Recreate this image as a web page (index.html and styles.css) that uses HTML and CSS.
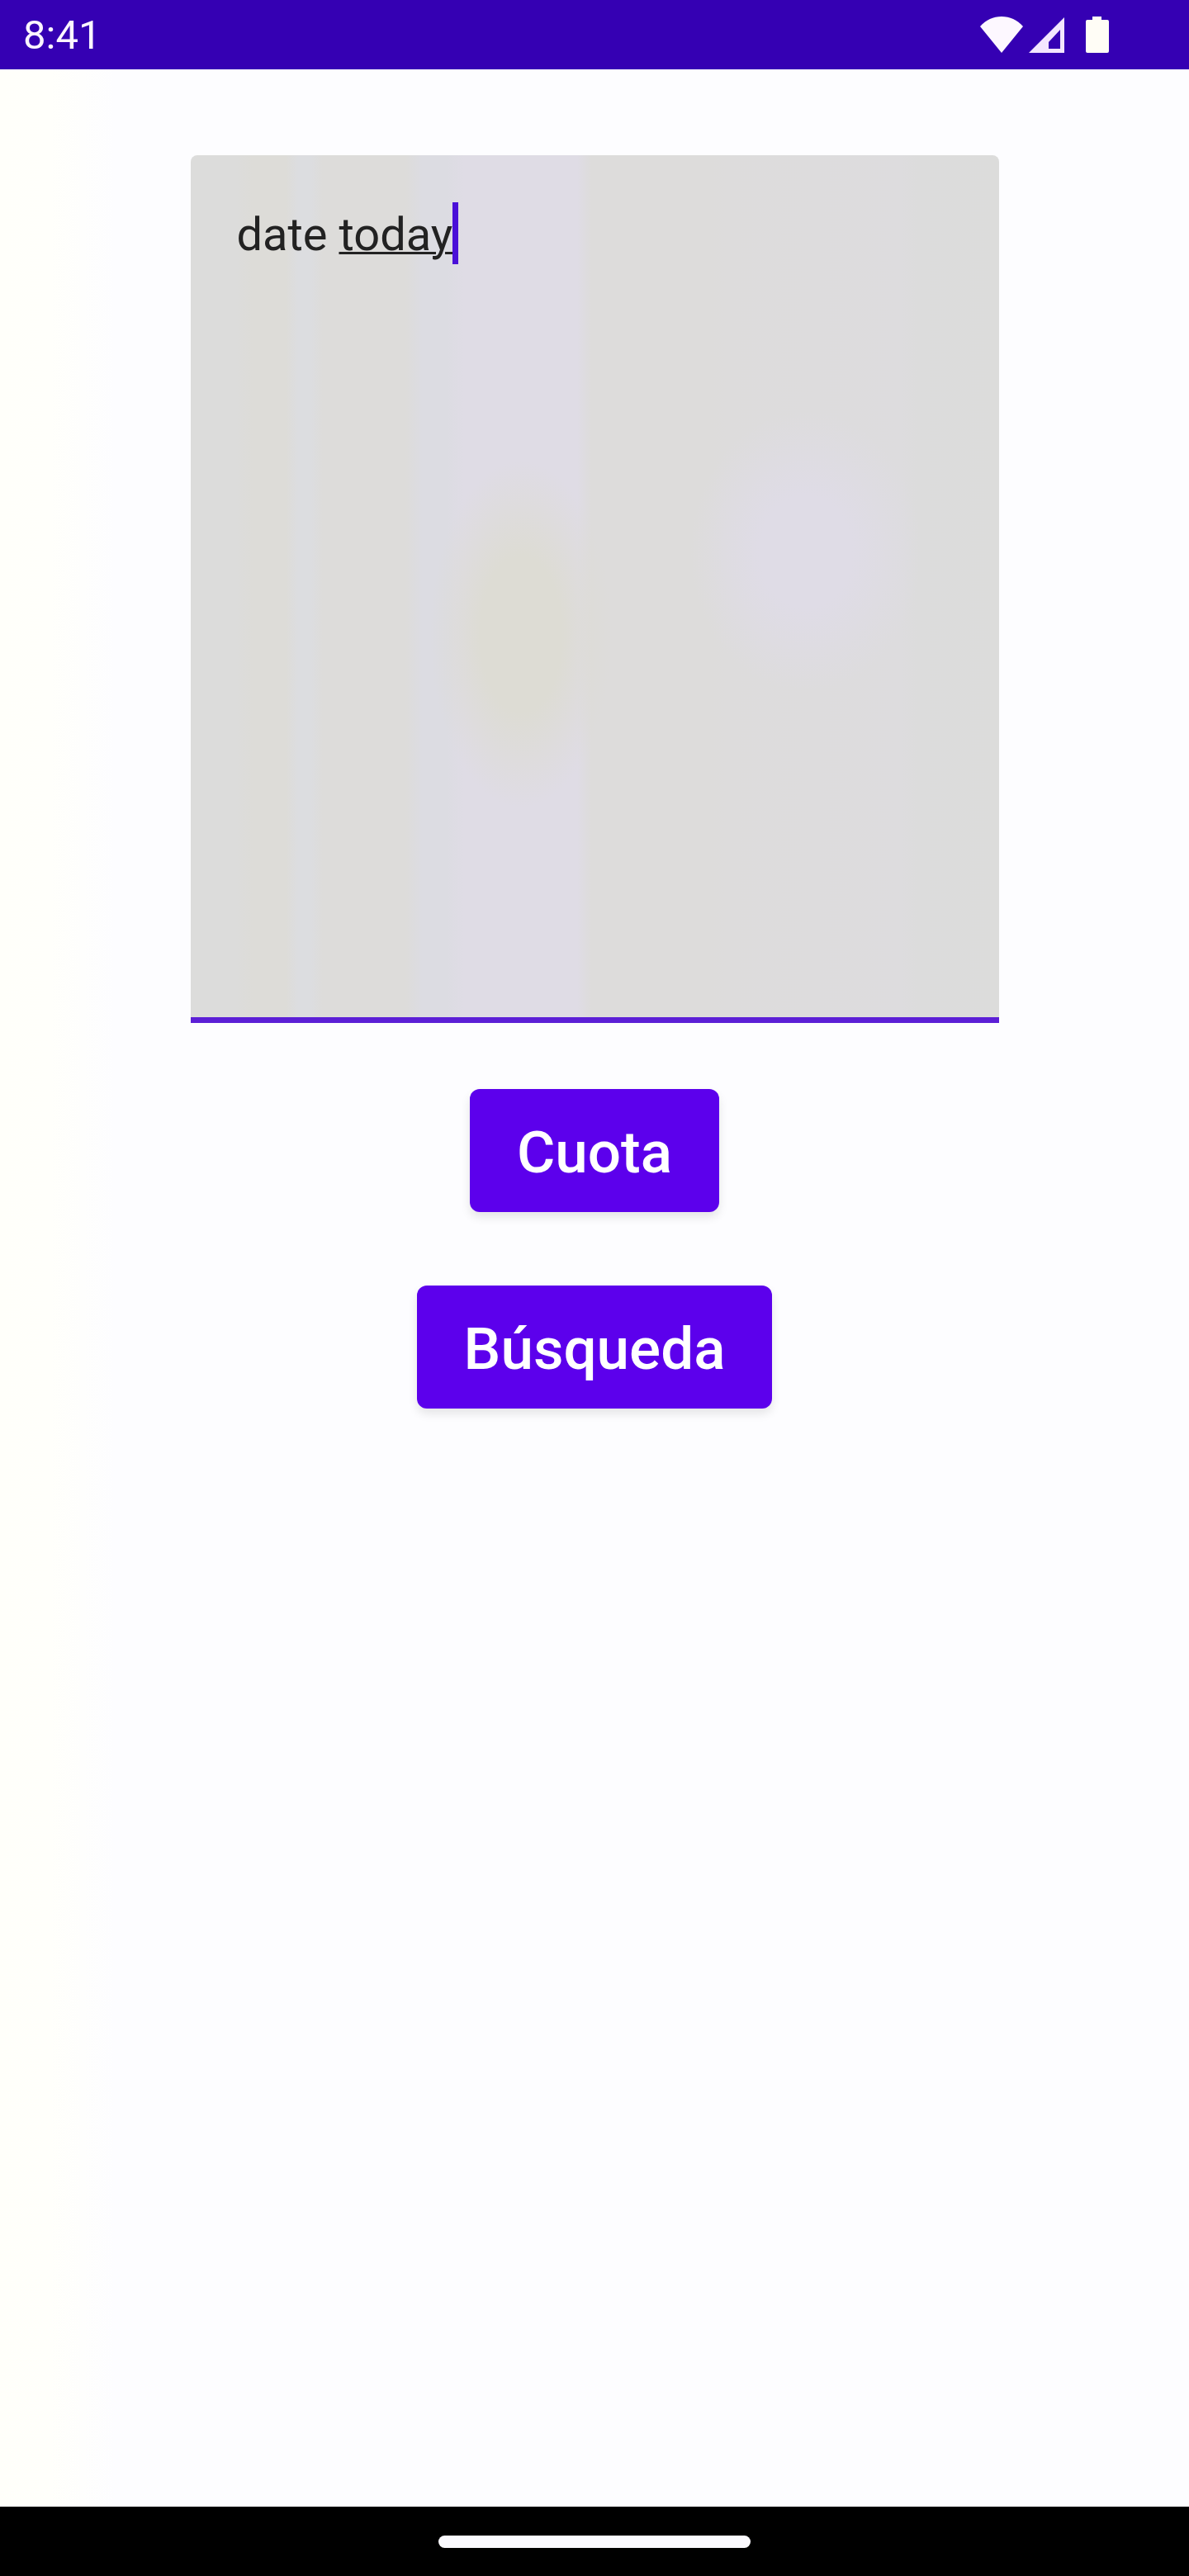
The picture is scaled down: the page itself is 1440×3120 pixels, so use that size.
FILE: index.html
```html
<!DOCTYPE html>
<html lang="en">
<head>
  <meta charset="UTF-8">
  <meta name="viewport" content="width=device-width, initial-scale=1.0">
  <title>Notes</title>
  <link rel="stylesheet" href="styles.css">
</head>
<body>
  <header class="status-bar">
    <div class="clock">8:41</div>
    <div class="status-icons">
      <svg class="icon-wifi" width="54" height="46" viewBox="0 0 54 46"><path d="M1 13C8 5 17 1 27 1s19 4 26 12L27 45z" fill="#fdf8ff"/></svg>
      <svg class="icon-signal" width="46" height="45" viewBox="0 0 46 45"><path fill-rule="evenodd" d="M44 1v43H1zM39 16 25 31v8h14z" fill="#f3e6ff"/></svg>
      <svg class="icon-battery" width="30" height="46" viewBox="0 0 30 46"><path d="M9 1h11v4h7q2 0 2 2v36q0 2-2 2H3q-2 0-2-2V7q0-2 2-2h6z" fill="#fffdf6"/></svg>
    </div>
  </header>

  <main>
    <div class="note-field">
      <p class="note-text">date <span class="composing">today</span><span class="caret"></span></p>
    </div>
    <button class="action" type="button">Cuota</button>
    <button class="action" type="button">Búsqueda</button>
  </main>

  <footer class="nav-bar">
    <div class="home-pill"></div>
  </footer>
</body>
</html>
```

FILE: styles.css
```css
html, body {
  height: 100%;
}
body {
  font-family: Roboto, "Liberation Sans", sans-serif;
  margin: 0;
  display: flex;
  flex-direction: column;
  background: linear-gradient(90deg, #fffffa 0, #fffffb 60px, #fdfdff 140px, #fdfdff 100%);
}
.status-bar {
  height: 84px;
  flex: none;
  box-sizing: border-box;
  background-color: #3500b3;
  color: #fbf5ff;
  display: flex;
  justify-content: space-between;
  align-items: center;
  padding: 0 96px 0 28px;
}
.clock {
  font-size: 49px;
  line-height: 87px;
}
.status-icons {
  display: flex;
  align-items: center;
}
.icon-signal {
  margin: 0 23px 0 5px;
}
main {
  flex: 1;
  display: flex;
  flex-direction: column;
  align-items: center;
  padding-top: 104px;
}
.note-field {
  width: 979px;
  height: 1051px;
  flex: none;
  box-sizing: border-box;
  padding: 57px 56px 0;
  border-radius: 8px 8px 0 0;
  border-bottom: 7px solid #5c1fd6;
  background:
    radial-gradient(ellipse 140px 170px at 745px 480px, #dfdce6 40%, transparent) no-repeat,
    radial-gradient(ellipse 110px 210px at 400px 580px, #dddcd4 45%, transparent) no-repeat,
    linear-gradient(90deg,
      #dcdcdb 0, #dcdcdb 55px, #dddcd8 75px, #dddcd8 115px, #dcdde0 130px, #dcdde0 145px,
      #dddcda 160px, #dddcda 260px, #dcdce2 280px, #dcdce2 310px, #dfdce5 330px, #dfdce5 468px,
      #dddcdb 485px, #dddcdb 630px, #dddcdc 650px, #dddcde 860px, #dcdcdc 880px, #dcdcdb 100%);
}
.note-text {
  margin: 0;
  font-size: 56px;
  line-height: 74px;
  color: #222;
}
.composing {
  text-decoration: underline;
  text-decoration-thickness: 3px;
}
.caret {
  display: inline-block;
  width: 7px;
  height: 75px;
  background-color: #4a10d8;
  vertical-align: -17px;
}
.action {
  flex: none;
  height: 149px;
  margin-top: 80px;
  padding: 3px 56.5px 0;
  border: 0;
  border-radius: 12px;
  background-color: #5c00ec;
  color: #fff;
  font-family: inherit;
  font-size: 71px;
  font-weight: 500;
  box-shadow: 0 6px 12px rgba(0, 0, 0, 0.1);
}
.action + .action {
  margin-top: 89px;
}
.nav-bar {
  height: 84px;
  flex: none;
  box-sizing: border-box;
  background-color: #000;
  display: flex;
  justify-content: center;
  padding-top: 35px;
}
.home-pill {
  width: 378px;
  height: 15px;
  border-radius: 8px;
  background-color: #fbfaff;
}
```
